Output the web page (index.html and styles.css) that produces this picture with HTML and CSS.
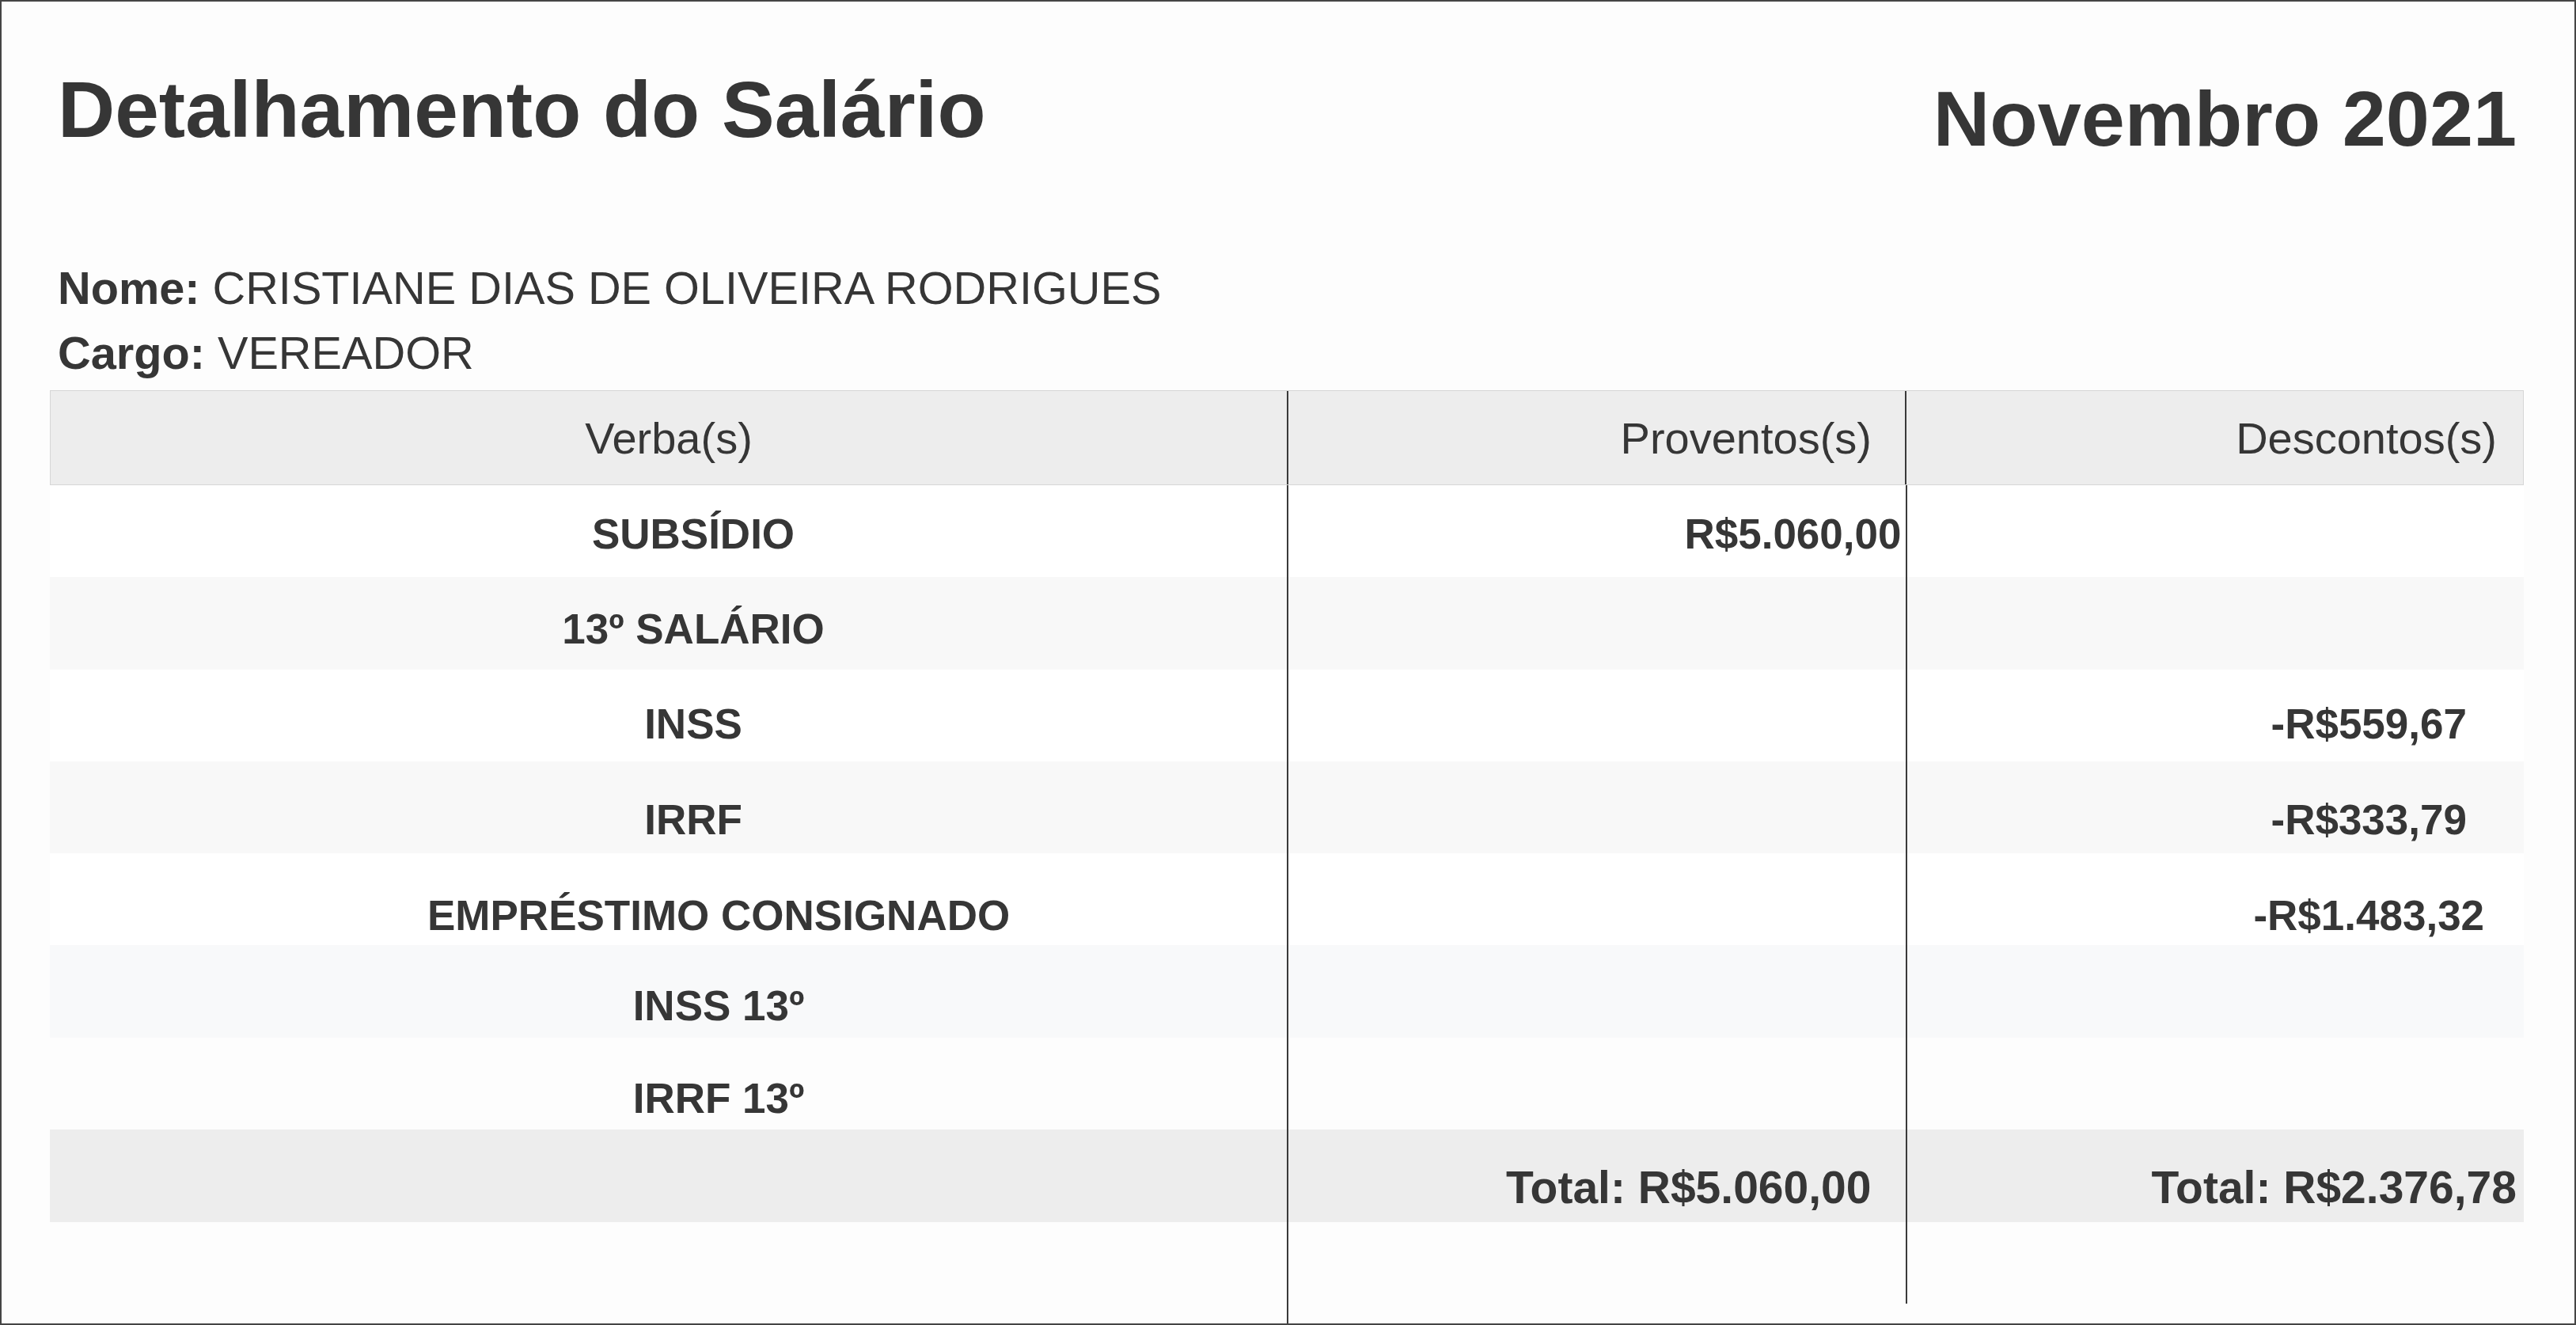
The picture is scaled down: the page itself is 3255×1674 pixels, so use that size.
FILE: index.html
```html
<!DOCTYPE html>
<html lang="pt-BR">
<head>
<meta charset="utf-8">
<title>Detalhamento do Salário</title>
<link rel="stylesheet" href="styles.css">
</head>
<body>
<div class="page">
  <header class="head">
    <h1 class="title">Detalhamento do Salário</h1>
    <h2 class="period">Novembro 2021</h2>
  </header>
  <div class="info">
    <p class="info-line"><strong>Nome:</strong> CRISTIANE DIAS DE OLIVEIRA RODRIGUES</p>
    <p class="info-line"><strong>Cargo:</strong> VEREADOR</p>
  </div>
  <div class="grid">
    <div class="row row-head">
      <div class="cell c1 h">Verba(s)</div>
      <div class="cell c2 h">Proventos(s)</div>
      <div class="cell c3 h">Descontos(s)</div>
    </div>
    <div class="row bg-white r1">
      <div class="cell c1 v">SUBSÍDIO</div>
      <div class="cell c2 v">R$5.060,00</div>
      <div class="cell c3 v"></div>
    </div>
    <div class="row bg-light r2">
      <div class="cell c1 v">13º SALÁRIO</div>
      <div class="cell c2 v"></div>
      <div class="cell c3 v"></div>
    </div>
    <div class="row bg-white r3">
      <div class="cell c1 v">INSS</div>
      <div class="cell c2 v"></div>
      <div class="cell c3 v">-R$559,67</div>
    </div>
    <div class="row bg-light r4">
      <div class="cell c1 v">IRRF</div>
      <div class="cell c2 v"></div>
      <div class="cell c3 v">-R$333,79</div>
    </div>
    <div class="row bg-white r5 wide">
      <div class="cell c1 v">EMPRÉSTIMO CONSIGNADO</div>
      <div class="cell c2 v"></div>
      <div class="cell c3 v">-R$1.483,32</div>
    </div>
    <div class="row bg-blue r6 wide">
      <div class="cell c1 v">INSS 13º</div>
      <div class="cell c2 v"></div>
      <div class="cell c3 v"></div>
    </div>
    <div class="row bg-off r7 wide">
      <div class="cell c1 v">IRRF 13º</div>
      <div class="cell c2 v"></div>
      <div class="cell c3 v"></div>
    </div>
    <div class="row row-total">
      <div class="cell c1 t"></div>
      <div class="cell c2 t">Total: R$5.060,00</div>
      <div class="cell c3 t">Total: R$2.376,78</div>
    </div>
    <div class="row row-tail">
      <div class="cell c1"></div>
      <div class="cell c2 tail-long"></div>
      <div class="cell c3 tail-short"></div>
    </div>
  </div>
</div>
</body>
</html>
```

FILE: styles.css
```css
html, body {
  margin: 0;
  padding: 0;
  background: #ffffff;
}

body {
  font-family: "Liberation Sans", Arial, Helvetica, sans-serif;
  color: #363636;
}

.page {
  box-sizing: border-box;
  height: 100vh;
  border: 2px solid #454545;
  padding: 77px 64px 0 61px;
  overflow: hidden;
  background: #fdfdfd;
}

.head {
  display: flex;
  justify-content: space-between;
  align-items: flex-start;
  padding-left: 10px;
}

.title {
  margin: 0;
  font-size: 100px;
  line-height: 119px;
  font-weight: 700;
}

.period {
  margin: 11px 9px 0 0;
  font-size: 99px;
  line-height: 120px;
  font-weight: 700;
}

.info {
  margin-top: 113px;
  padding-left: 10px;
}

.info-line {
  margin: 0;
  font-size: 57.7px;
  line-height: 82px;
}

.info-line strong {
  font-weight: 700;
}

.grid {
  margin-top: 6px;
}

.row {
  box-sizing: border-box;
  display: grid;
  grid-template-columns: 2fr 1fr 1fr;
}

.cell {
  box-sizing: border-box;
  display: flex;
  align-items: center;
  white-space: nowrap;
  min-width: 0;
}

.c2, .c3 {
  border-left: 2px solid #3a3a3a;
}

.row-head {
  height: 120px;
  background: #ededed;
  border: 1px solid #d6d6d6;
}

.h {
  font-size: 56px;
  font-weight: 400;
}

.h.c1 { justify-content: center; }
.h.c2 { justify-content: flex-end; padding-right: 42px; }
.h.c3 { justify-content: flex-end; padding-right: 33px; }

.bg-white { background: #ffffff; height: 116.3px; }
.bg-light { background: #f8f8f8; height: 116.3px; }
.bg-blue  { background: #f8f9fa; height: 116.3px; }
.bg-off   { background: #fdfdfd; height: 116.3px; }

/* text in the reference sits progressively lower within its stripe */
.r1 .cell { padding-top: 6px; }
.r2 .cell { padding-top: 14px; }
.r3 .cell { padding-top: 22px; }
.r4 .cell { padding-top: 30px; }
.r5 .cell { padding-top: 40px; }
.r6 .cell { padding-top: 36px; }
.r7 .cell { padding-top: 38px; }

.v {
  font-size: 53px;
  font-weight: 700;
}

.v.c1 {
  padding-left: 477px;
  padding-right: 414px;
  justify-content: center;
  justify-content: safe center;
}

.wide .v.c1 {
  padding-right: 350px;
}

.v.c2 {
  justify-content: flex-end;
  padding-right: 5px;
}

.v.c3 {
  justify-content: center;
  padding-left: 388px;
}

.row-total {
  height: 117px;
  background: #ededed;
}

.row-total .cell {
  padding-top: 28px;
}

.t {
  font-size: 57px;
  font-weight: 700;
}

.t.c2 { justify-content: flex-end; padding-right: 43px; }
.t.c3 { justify-content: flex-end; padding-right: 9px; }

.row-tail {
  align-items: start;
}

.tail-long { height: 140px; }
.tail-short { height: 103px; }
```
